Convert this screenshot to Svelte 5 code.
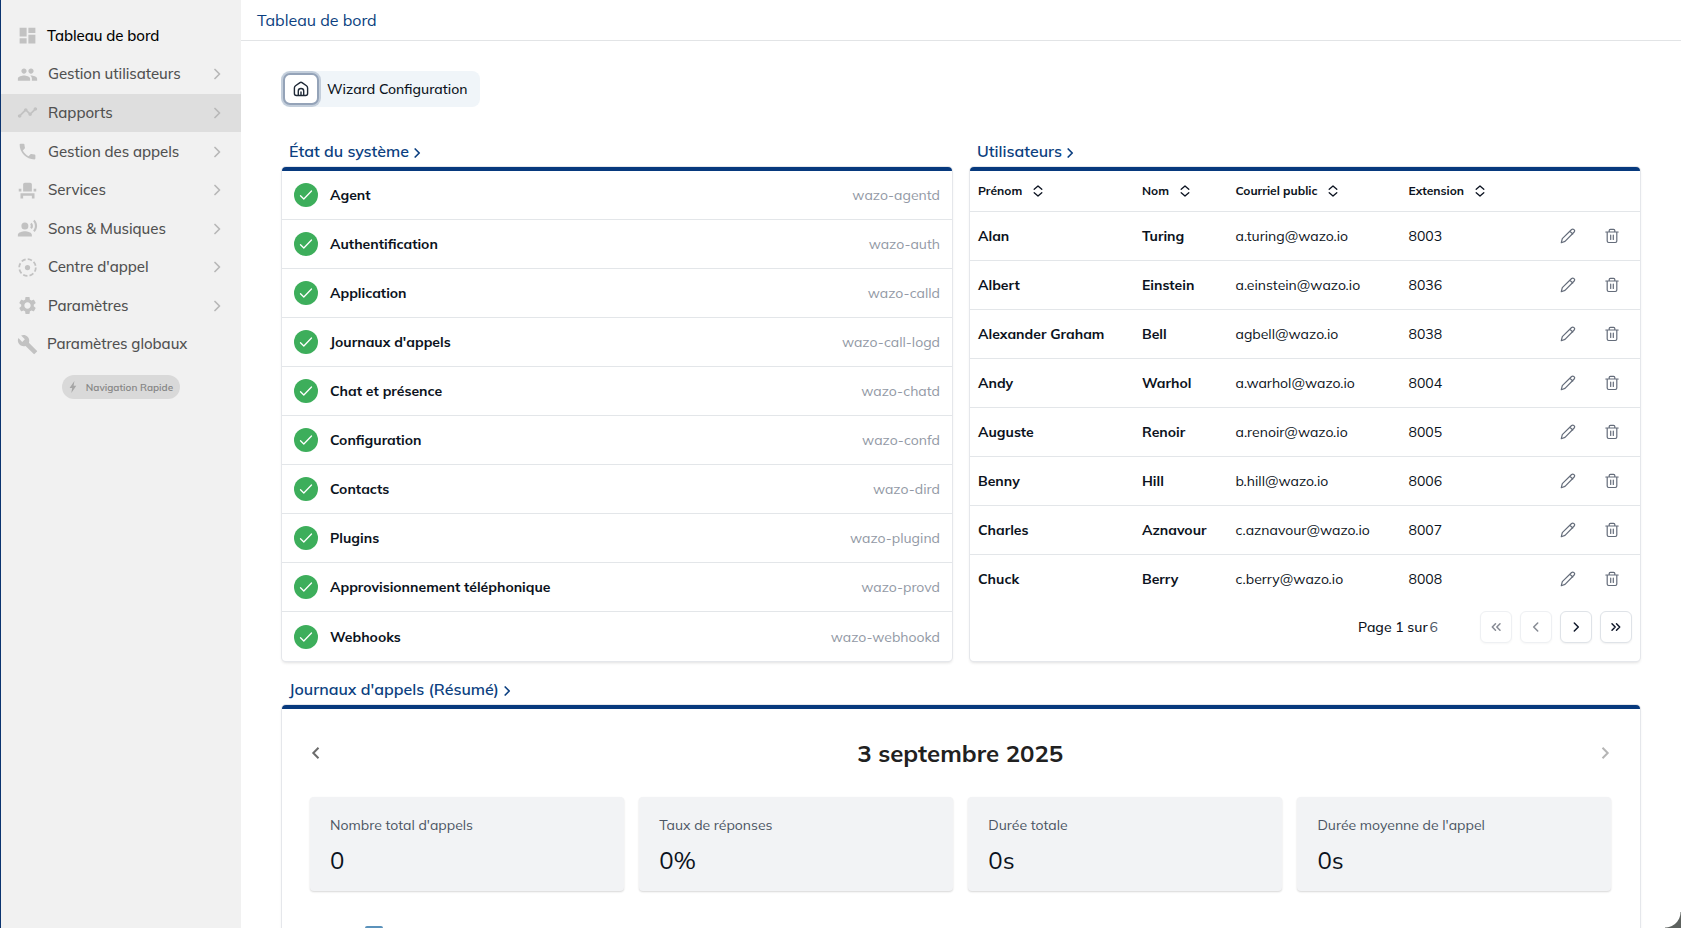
<script>
  const menu = [
    { label: "Tableau de bord", icon: "dashboard", active: true },
    { label: "Gestion utilisateurs", icon: "people", more: true },
    { label: "Rapports", icon: "timeline", more: true, hover: true },
    { label: "Gestion des appels", icon: "phone", more: true },
    { label: "Services", icon: "seat", more: true },
    { label: "Sons & Musiques", icon: "voice", more: true },
    { label: "Centre d'appel", icon: "center", more: true },
    { label: "Paramètres", icon: "settings", more: true },
    { label: "Paramètres globaux", icon: "build" },
  ];

  const icons = {
    dashboard: "M3 13h8V3H3v10zm0 8h8v-6H3v6zm10 0h8V11h-8v10zm0-18v6h8V3h-8z",
    people: "M16 11c1.66 0 2.99-1.34 2.99-3S17.66 5 16 5c-1.66 0-3 1.34-3 3s1.34 3 3 3zm-8 0c1.66 0 2.99-1.34 2.99-3S9.66 5 8 5C6.34 5 5 6.34 5 8s1.34 3 3 3zm0 2c-2.33 0-7 1.17-7 3.5V19h14v-2.500C15 14.170 10.330 13 8 13zm8 0c-.29 0-.62.02-.97.05 1.160.84 1.970 1.970 1.970 3.450V19h6v-2.500c0-2.330-4.670-3.500-7-3.500z",
    timeline: "M23 8c0 1.100-.9 2-2 2-.18 0-.35-.02-.51-.07l-3.560 3.550c.05.16.07.34.07.52 0 1.100-.9 2-2 2s-2-.9-2-2c0-.18.02-.36.07-.52l-2.550-2.550c-.16.05-.34.07-.52.07s-.36-.02-.52-.07l-4.550 4.560c.05.16.07.33.07.51 0 1.100-.9 2-2 2s-2-.9-2-2 .9-2 2-2c.18 0 .35.02.51.07l4.560-4.550C8.020 9.360 8 9.180 8 9c0-1.100.9-2 2-2s2 .9 2 2c0 .18-.02.36-.07.52l2.550 2.550c.16-.05.34-.07.52-.07s.36.02.52.07l3.550-3.560C19.020 8.350 19 8.180 19 8c0-1.100.9-2 2-2s2 .9 2 2z",
    phone: "M6.620 10.790c1.440 2.830 3.760 5.140 6.590 6.590l2.200-2.200c.27-.27.67-.36 1.020-.24 1.120.37 2.330.57 3.570.57.55 0 1 .45 1 1V20c0 .55-.45 1-1 1-9.390 0-17-7.610-17-17 0-.55.45-1 1-1h3.500c.55 0 1 .45 1 1 0 1.250.2 2.450.57 3.570.11.35.03.74-.25 1.020l-2.200 2.200z",
    seat: "M4 18v3h3v-3h10v3h3v-6H4zm15-8h3v3h-3zM2 10h3v3H2zm15 3H7V5c0-1.100.9-2 2-2h6c1.100 0 2 .9 2 2v8z",
    voice: "M9 5a4 4 0 1 0 0 8 4 4 0 1 0 0-8zM9 15c-2.670 0-8 1.340-8 4v2h16v-2c0-2.660-5.330-4-8-4zm7.760-9.640l-1.680 1.690c.84 1.180.84 2.710 0 3.890l1.680 1.690c2.020-2.020 2.020-5.070 0-7.270zM20.070 2l-1.630 1.630c2.770 3.020 2.770 7.560 0 10.740L20.070 16c3.900-3.890 3.910-9.950 0-14z",
    settings: "M19.140 12.940c.04-.3.06-.61.06-.94 0-.32-.02-.64-.07-.94l2.030-1.580c.18-.14.23-.41.12-.61l-1.920-3.320c-.12-.22-.37-.29-.59-.22l-2.390.96c-.5-.38-1.030-.7-1.620-.94l-.36-2.540c-.04-.24-.24-.41-.48-.41h-3.840c-.24 0-.43.17-.47.41l-.36 2.540c-.59.24-1.130.57-1.620.94l-2.390-.96c-.22-.08-.47 0-.59.22L2.740 8.870c-.12.21-.08.47.12.61l2.030 1.580c-.05.3-.09.63-.09.94s.02.64.07.94l-2.030 1.580c-.18.14-.23.41-.12.61l1.920 3.320c.12.22.37.29.59.22l2.390-.96c.5.38 1.030.7 1.620.94l.36 2.540c.05.24.24.41.48.41h3.840c.24 0 .44-.17.47-.41l.36-2.540c.59-.24 1.130-.56 1.620-.94l2.390.96c.22.08.47 0 .59-.22l1.920-3.320c.12-.22.07-.47-.12-.61l-2.010-1.580zM12 15.600c-1.980 0-3.600-1.620-3.600-3.600s1.620-3.600 3.600-3.600 3.600 1.620 3.600 3.600-1.620 3.600-3.600 3.600z",
    build: "M22.700 19l-9.100-9.100c.9-2.300.4-5-1.500-6.900-2-2-5-2.400-7.400-1.300L9 6 6 9 1.600 4.700C.4 7.100.9 10.100 2.900 12.100c1.900 1.900 4.600 2.400 6.900 1.500l9.100 9.100c.4.4 1 .4 1.400 0l2.300-2.300c.5-.4.5-1.100.1-1.400z",
  };

  const services = [
    ["Agent", "wazo-agentd"],
    ["Authentification", "wazo-auth"],
    ["Application", "wazo-calld"],
    ["Journaux d'appels", "wazo-call-logd"],
    ["Chat et présence", "wazo-chatd"],
    ["Configuration", "wazo-confd"],
    ["Contacts", "wazo-dird"],
    ["Plugins", "wazo-plugind"],
    ["Approvisionnement téléphonique", "wazo-provd"],
    ["Webhooks", "wazo-webhookd"],
  ];

  const columns = ["Prénom", "Nom", "Courriel public", "Extension"];

  const users = [
    ["Alan", "Turing", "a.turing@wazo.io", "8003"],
    ["Albert", "Einstein", "a.einstein@wazo.io", "8036"],
    ["Alexander Graham", "Bell", "agbell@wazo.io", "8038"],
    ["Andy", "Warhol", "a.warhol@wazo.io", "8004"],
    ["Auguste", "Renoir", "a.renoir@wazo.io", "8005"],
    ["Benny", "Hill", "b.hill@wazo.io", "8006"],
    ["Charles", "Aznavour", "c.aznavour@wazo.io", "8007"],
    ["Chuck", "Berry", "c.berry@wazo.io", "8008"],
  ];

  const stats = [
    ["Nombre total d'appels", "0"],
    ["Taux de réponses", "0%"],
    ["Durée totale", "0s"],
    ["Durée moyenne de l'appel", "0s"],
  ];

  const pager = [
    { d: "M7.500 4.800 4.300 8l3.200 3.200M12 4.800 8.800 8l3.200 3.200", disabled: true },
    { d: "M9.700 4 5.700 8l4 4", disabled: true },
    { d: "M6.300 4l4 4-4 4" },
    { d: "M4 4.800 7.200 8 4 11.200M8.500 4.800 11.700 8l-3.200 3.200" },
  ];
</script>

{#snippet title(text)}
  <h2>
    {text}
    <svg width="7" height="12" viewBox="0 0 7 12"><path d="M1.200 2l4 4-4 4" /></svg>
  </h2>
{/snippet}

<div class="app">
  <nav>
    {#each menu as item}
      <a class="item" class:active={item.active} class:hover={item.hover} class:leaf={!item.more}>
        <svg class="icon" viewBox="0 0 24 24">
          {#if item.icon == "center"}
            <circle cx="12" cy="12" r="3" />
            <circle class="ring" cx="12" cy="12" r="9.500" />
          {:else}
            <path d={icons[item.icon]} />
          {/if}
        </svg>
        <span>{item.label}</span>
        {#if item.more}
          <svg class="more" width="7" height="14" viewBox="0 0 7 14"><path d="M1 2.500 5.500 7 1 11.500" /></svg>
        {/if}
      </a>
    {/each}
    <button class="quick">
      <svg width="8" height="12" viewBox="0 0 8 12"><path d="M5.400 0 .6 7h2.600L2.300 12l5-7.200H4.600z" /></svg>
      <span>Navigation Rapide</span>
    </button>
  </nav>

  <div class="page">
    <header><span>Tableau de bord</span></header>
    <main>
      <div class="wizard">
        <button aria-label="home">
          <svg width="16" height="16" viewBox="0 0 16 16">
            <path d="M7 1.600 2.500 4.800Q1.400 5.700 1.400 7v5.500q0 2 2 2h9.200q2 0 2-2V7q0-1.300-1.100-2.200L9 1.600Q8 .9 7 1.600zM5.300 14.500V10q0-2.500 2.700-2.500t2.700 2.500v4.500M8 11v3.500" />
          </svg>
        </button>
        <span>Wizard Configuration</span>
      </div>

      <div class="columns">
        <section>
          {@render title("État du système")}
          <div class="panel">
            {#each services as [name, process]}
              <div class="service">
                <span class="check">
                  <svg width="14" height="12" viewBox="0 0 14 12"><path d="M1.500 6.700 4.800 10l7.700-8" /></svg>
                </span>
                <strong>{name}</strong>
                <span class="process">{process}</span>
              </div>
            {/each}
          </div>
        </section>

        <section>
          {@render title("Utilisateurs")}
          <div class="panel">
            <div class="row head">
              {#each columns as column}
                <span>
                  {column}
                  <svg width="10" height="12" viewBox="0 0 10 12"><path d="M1.200 4.300 5 1l3.800 3.300M1.200 7.700 5 11l3.800-3.300" /></svg>
                </span>
              {/each}
            </div>
            {#each users as [first, last, mail, exten]}
              <div class="row">
                <strong>{first}</strong>
                <strong>{last}</strong>
                <span class="mail">{mail}</span>
                <span class="exten">{exten}</span>
                <svg class="action" viewBox="0 0 16 16">
                  <path d="M1.300 14.700l1-4.100L11.600 1.500q1.200-1 2.400.1t.2 2.400L5 13.400zM10 3.300l2.700 2.700" />
                </svg>
                <svg class="action" viewBox="0 0 16 16">
                  <path d="M1.800 4h12.400M5.200 4V2.500q0-1.200 1.200-1.200h3.200q1.200 0 1.200 1.200V4M3.200 4v9.100q0 1.400 1.400 1.400h6.800q1.400 0 1.400-1.400V4M6.700 7v4.500M9.300 7v4.500" />
                </svg>
              </div>
            {/each}
            <div class="pager">
              <span>Page 1 sur</span><em>6</em>
              {#each pager as page}
                <button disabled={page.disabled} aria-label="page">
                  <svg width="16" height="16" viewBox="0 0 16 16"><path d={page.d} /></svg>
                </button>
              {/each}
            </div>
          </div>
        </section>
      </div>

      <section class="logs">
        {@render title("Journaux d'appels (Résumé)")}
        <div class="panel">
          <div class="day">
            <svg width="10" height="14" viewBox="0 0 10 14"><path d="M7.500 1.800 2.300 7l5.200 5.200" /></svg>
            <h3>3 septembre 2025</h3>
            <svg class="off" width="10" height="14" viewBox="0 0 10 14"><path d="M2.500 1.800 7.700 7l-5.200 5.200" /></svg>
          </div>
          <div class="stats">
            {#each stats as [label, value]}
              <div class="stat">
                <span>{label}</span>
                <b>{value}</b>
              </div>
            {/each}
          </div>
          <div class="legend"></div>
        </div>
      </section>
    </main>
  </div>
  <div class="corner"></div>
</div>

<style>
  :global(body) {
    margin: 0;
    background: #fff;
  }
  .app {
    position: relative;
    display: flex;
    box-sizing: border-box;
    height: 928px;
    border-left: 1px solid #0b3470;
    overflow: hidden;
    font-family: Mulish, Lato, "Noto Sans", sans-serif;
    font-size: 14px;
    color: #0b1220;
  }
  button {
    font-family: inherit;
    padding: 0;
  }
  svg {
    flex: none;
    fill: none;
    stroke: currentColor;
    stroke-linecap: round;
    stroke-linejoin: round;
  }

  nav {
    flex: none;
    box-sizing: border-box;
    width: 240px;
    padding-top: 16.500px;
    background: #f1f1f1;
  }
  .item {
    display: flex;
    align-items: center;
    height: 38.580px;
    padding: 0 20px 0 16px;
    font-size: 15px;
    font-weight: 500;
    letter-spacing: -0.050px;
    color: #505050;
  }
  .item.active {
    color: #000;
  }
  .item.hover {
    background: #dedede;
  }
  .item span {
    flex: 1;
    margin: -1px 0 0 10px;
  }
  .item.leaf span {
    margin-left: 9px;
  }
  .icon {
    width: 21px;
    height: 21px;
    fill: #c2c2c2;
    stroke: none;
  }
  .ring {
    fill: none;
    stroke: #c2c2c2;
    stroke-width: 2;
    stroke-dasharray: 5 2.460;
    stroke-linecap: butt;
  }
  .more {
    color: #b8b8b8;
    stroke-width: 1.700;
  }
  .quick {
    display: flex;
    align-items: center;
    justify-content: center;
    gap: 9px;
    width: 118px;
    height: 24px;
    margin: 11.500px 0 0 61px;
    border: 0;
    border-radius: 12px;
    background: #d9d9d9;
    color: #858585;
    font-size: 10px;
    font-weight: 600;
  }
  .quick svg {
    fill: #a6a6a6;
    stroke: none;
  }

  .page {
    flex: 1;
    min-width: 0;
  }
  header {
    display: flex;
    align-items: center;
    height: 40px;
    padding-left: 16px;
    border-bottom: 1px solid #e2e4e6;
    color: #0b3f80;
    font-size: 16px;
  }
  main {
    padding: 30px 40px 0;
  }

  .wizard {
    display: flex;
    align-items: center;
    box-sizing: border-box;
    width: 199px;
    height: 36px;
    padding-left: 2px;
    border-radius: 8px;
    background: #f0f5f9;
  }
  .wizard button {
    display: grid;
    place-items: center;
    box-sizing: border-box;
    width: 36px;
    height: 32px;
    border: 2px solid #94a3b8;
    border-radius: 7px;
    background: #fff;
    color: #1f2937;
    box-shadow: 0 0 0 2px #c3cedb;
  }
  .wizard button svg {
    stroke-width: 1.400;
  }
  .wizard span {
    margin-left: 8px;
    font-weight: 500;
  }

  .columns {
    display: grid;
    grid-template-columns: 1fr 1fr;
    gap: 16px;
    margin-top: 33px;
  }
  h2 {
    display: flex;
    align-items: center;
    gap: 5px;
    box-sizing: border-box;
    height: 27px;
    margin: 0;
    padding: 0 0 5px 8px;
    font-size: 16px;
    font-weight: 600;
    line-height: 22px;
    color: #0b3f80;
  }
  h2 svg {
    margin-top: 3px;
    stroke-width: 1.700;
  }
  .panel {
    box-sizing: border-box;
    height: 494px;
    margin: 0 1px;
    border-top: 4px solid #07397d;
    border-radius: 4px;
    background: #fff;
    box-shadow: 0 0 0 1px #e5e7eb, 0 2px 3px rgba(0, 0, 0, 0.120);
  }

  .service {
    display: flex;
    align-items: center;
    box-sizing: border-box;
    height: 49px;
    padding: 0 12px;
    border-bottom: 1px solid #e3e6e9;
  }
  .service:last-child {
    border-bottom: 0;
  }
  .check {
    display: grid;
    place-items: center;
    width: 24px;
    height: 24px;
    margin-right: 12px;
    border-radius: 50%;
    background: #3dae5b;
    color: #fff;
  }
  .check svg {
    stroke-width: 1.300;
  }
  .process {
    margin-left: auto;
    color: #9299a5;
  }

  .row {
    display: grid;
    grid-template-columns: 164px 93.500px 173px 151.500px 44px 16px;
    align-items: center;
    box-sizing: border-box;
    height: 49px;
    padding-left: 8px;
    border-bottom: 1px solid #e3e6e9;
  }
  .row:nth-child(9) {
    border-bottom: 0;
    padding-bottom: 1px;
  }
  .head {
    height: 41px;
    padding-bottom: 1px;
    font-size: 12px;
    font-weight: 700;
  }
  .head span {
    display: flex;
    align-items: center;
    gap: 11px;
  }
  .head svg {
    stroke-width: 1.300;
  }
  .action {
    width: 16px;
    height: 16px;
    color: #646c7a;
    stroke-width: 1.200;
  }
  .pager {
    display: flex;
    align-items: center;
    justify-content: flex-end;
    gap: 8px;
    padding: 7px 8px 0 0;
  }
  .pager span {
    margin-right: -6px;
    font-weight: 500;
  }
  .pager em {
    margin-right: 34px;
    font-style: normal;
    color: #4b5563;
  }
  .pager button {
    display: grid;
    place-items: center;
    box-sizing: border-box;
    width: 32px;
    height: 32px;
    border: 1px solid #dfe3e8;
    border-radius: 6px;
    background: #fff;
    color: #0f172a;
    box-shadow: 0 1px 2px rgba(0, 0, 0, 0.060);
  }
  .pager button:disabled {
    opacity: 0.500;
  }
  .pager svg {
    stroke-width: 1.500;
  }

  .logs {
    margin-top: 17px;
  }
  .logs .panel {
    padding: 0 29px 0 27.500px;
  }
  .day {
    display: flex;
    align-items: center;
    justify-content: space-between;
    height: 88px;
    color: #6b6b6b;
  }
  .day svg {
    margin: 0 1px;
    stroke-width: 2;
    stroke-linecap: butt;
    stroke-linejoin: miter;
  }
  .day .off {
    color: #b5b5b5;
  }
  h3 {
    margin: 0;
    font-size: 24px;
    font-weight: 700;
    color: #212121;
  }
  .stats {
    display: grid;
    grid-template-columns: repeat(4, 1fr);
    gap: 15px;
  }
  .stat {
    display: flex;
    flex-direction: column;
    box-sizing: border-box;
    height: 94px;
    padding: 18px 20.500px;
    border-radius: 4px;
    background: #f2f3f5;
    box-shadow: 0 1px 2px rgba(0, 0, 0, 0.160);
  }
  .stat span {
    line-height: 20px;
    color: #4b5563;
  }
  .stat b {
    margin-top: 9px;
    font-size: 24px;
    font-weight: 400;
    line-height: 32px;
  }
  .legend {
    width: 18px;
    height: 14px;
    margin: 35px 0 0 55px;
    border-radius: 2px;
    background: #5b92bb;
  }
  .corner {
    position: absolute;
    right: 0;
    bottom: 0;
    width: 16px;
    height: 16px;
    background: radial-gradient(circle at 0 0, transparent 15px, #5d625f 16px);
  }
</style>
